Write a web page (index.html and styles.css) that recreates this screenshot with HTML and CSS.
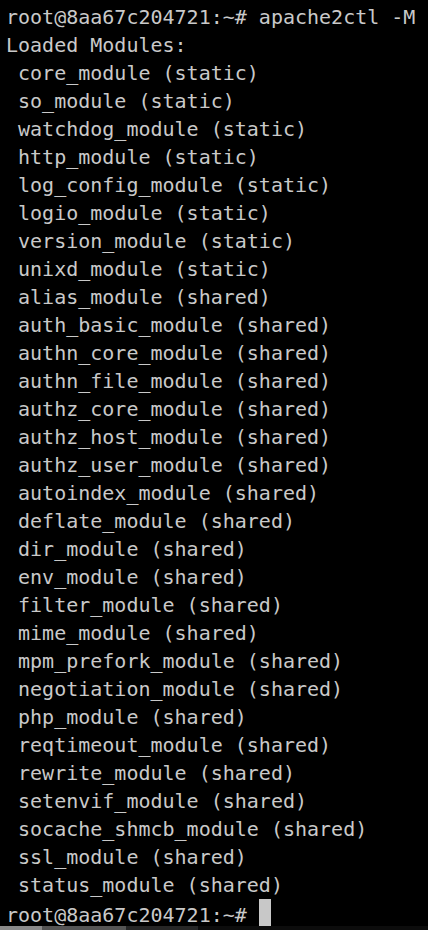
FILE: index.html
```html
<!DOCTYPE html>
<html>
<head>
<meta charset="utf-8">
<link rel="stylesheet" href="styles.css">
</head>
<body>
<div class="screen">
<pre class="term">root@8aa67c204721:~# apache2ctl -M
Loaded Modules:
 core_module (static)
 so_module (static)
 watchdog_module (static)
 http_module (static)
 log_config_module (static)
 logio_module (static)
 version_module (static)
 unixd_module (static)
 alias_module (shared)
 auth_basic_module (shared)
 authn_core_module (shared)
 authn_file_module (shared)
 authz_core_module (shared)
 authz_host_module (shared)
 authz_user_module (shared)
 autoindex_module (shared)
 deflate_module (shared)
 dir_module (shared)
 env_module (shared)
 filter_module (shared)
 mime_module (shared)
 mpm_prefork_module (shared)
 negotiation_module (shared)
 php_module (shared)
 reqtimeout_module (shared)
 rewrite_module (shared)
 setenvif_module (shared)
 socache_shmcb_module (shared)
 ssl_module (shared)
 status_module (shared)
root@8aa67c204721:~# <span class="cursor"></span></pre>
<div class="strip">
<span class="seg seg1"></span><span class="seg seg2"></span><span class="seg seg3"></span>
</div>
</div>
</body>
</html>
```
FILE: styles.css
```css
html, body {
  margin: 0;
  padding: 0;
  background: #000;
}
.screen {
  width: 428px;
  height: 930px;
  display: flex;
  flex-direction: column;
  overflow: hidden;
  background: #000;
}
.term {
  flex: 1 1 0;
  min-height: 0;
  margin: 0;
  padding: 3px 0 0 6px;
  font-family: "DejaVu Sans Mono", monospace;
  font-size: 20px;
  line-height: 28px;
  color: #c9c9c9;
  white-space: pre;
  overflow: hidden;
}
.cursor {
  display: inline-block;
  width: 12px;
  height: 29px;
  background: #c8c8c8;
  vertical-align: -6px;
}
.strip {
  flex: 0 0 4px;
  height: 4px;
  display: flex;
  background: #0c0c0c;
}
.seg { display: block; height: 100%; }
.seg1 { width: 42px; background: #8a8a8a; }
.seg2 { width: 84px; background: #555; }
.seg3 { width: 72px; background: #262626; }
```
